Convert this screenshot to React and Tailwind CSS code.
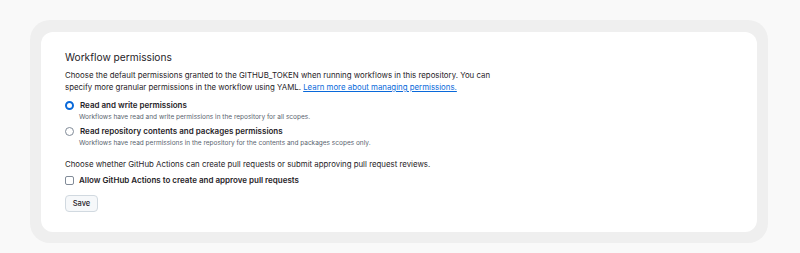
export default function App() {
  return (
    <div className="min-h-[253px] bg-[#f9f9f9] pl-[30px] pt-[20px] font-['Inter',sans-serif] text-[#1f2328]">
      <div className="w-[738px] rounded-[20px] bg-[#efefef] px-[11px] pt-[12px] pb-[11px]">
        <div className="rounded-[12px] bg-white pl-[24px] pt-[18px] pb-[20px]">
          <h2 className="text-[10.2px] leading-[14px] font-normal">Workflow permissions</h2>
          <p className="mt-[5px] w-[440px] text-[7.85px] leading-[12px]">
            Choose the default permissions granted to the GITHUB_TOKEN when running workflows in this repository. You can
            specify more granular permissions in the workflow using YAML.{' '}
            <a href="#" className="text-[#0969da] underline">Learn more about managing permissions.</a>
          </p>

          <div className="mt-[6px]">
            <label className="flex items-center gap-[6px] text-[8px] leading-[12px] font-semibold">
              <span className="h-[9px] w-[9px] rounded-full border-[2.5px] border-[#0969da] bg-white" />
              Read and write permissions
            </label>
            <p className="pl-[14px] text-[6.5px] leading-[12px] text-[#59636e]">
              Workflows have read and write permissions in the repository for all scopes.
            </p>
          </div>

          <div className="mt-[2px]">
            <label className="flex items-center gap-[6px] text-[8px] leading-[12px] font-semibold">
              <span className="h-[9px] w-[9px] rounded-full border border-[#818b98] bg-white" />
              Read repository contents and packages permissions
            </label>
            <p className="pl-[14px] text-[6.5px] leading-[12px] text-[#59636e]">
              Workflows have read permissions in the repository for the contents and packages scopes only.
            </p>
          </div>

          <p className="mt-[9px] text-[7.85px] leading-[12px]">
            Choose whether GitHub Actions can create pull requests or submit approving pull request reviews.
          </p>

          <label className="mt-[4px] flex items-center gap-[5px] text-[8px] leading-[12px] font-semibold">
            <span className="h-[9px] w-[9px] rounded-[2px] border border-[#818b98] bg-white" />
            Allow GitHub Actions to create and approve pull requests
          </label>

          <button className="mt-[9px] block h-[17px] w-[33px] rounded-[4px] border border-[#d1d9e0] bg-[#f6f8fa] text-[7.5px] font-medium">
            Save
          </button>
        </div>
      </div>
    </div>
  );
}
